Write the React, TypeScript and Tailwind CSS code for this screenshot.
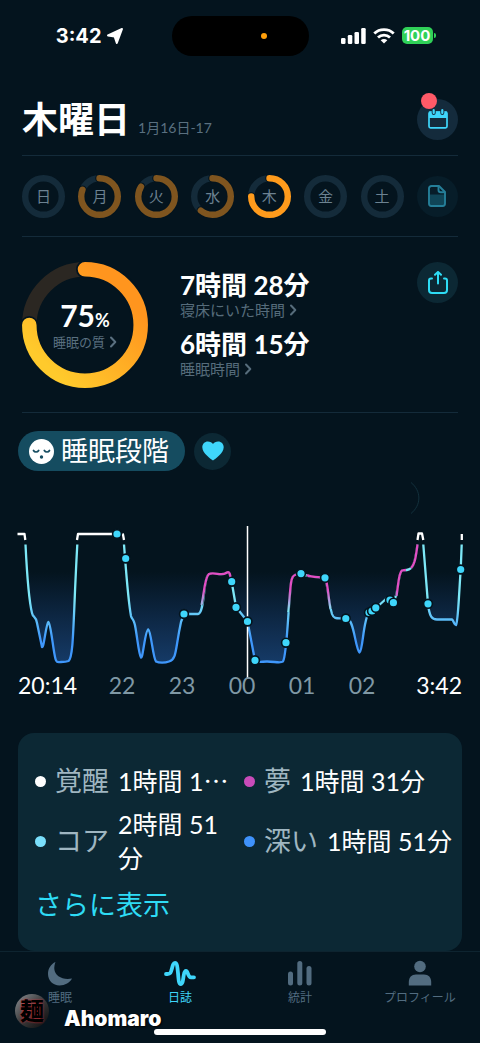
import type { ReactNode } from 'react';

const days = [
  { label: '日', value: 0 },
  { label: '月', value: 81 },
  { label: '火', value: 84 },
  { label: '水', value: 61 },
  { label: '木', value: 75, active: true },
  { label: '金', value: 0 },
  { label: '土', value: 0 },
];

const hours = ['22', '23', '00', '01', '02'];

// Sleep events shown as dots on the curve
const events = [
  [117, 534], [125.7, 558.5], [184, 614], [231.7, 581.7], [236, 607.3], [247.5, 621.5],
  [255, 660.3], [286, 642.7], [301, 573.6], [325, 577.8], [345.8, 618.5], [369, 612.5],
  [372, 611], [375.8, 607.8], [390, 600], [393.4, 602.7], [428, 603.8], [460.7, 569.5],
];

const curve =
  'M25.5 544.5 C27 575 29.5 603 32 613 C33 618 35.5 615 37 623 L42 647 C44 648 46 624 48.3 622 C51 624 53 650 55.5 659 C56.5 663 58 662 61 662 C64 662 66 662 68.5 661 C74 657 73 620 77.3 544.5' +
  ' L123.5 544.5 C126 570 128 600 131 616 C132 620 134 618 135.5 628 C138 643 139 655 141 657.5 C143 659 145 630 148.3 629.5 C151 631 153 658 156 661.5 C159 663 165 663 169 661.5 C177 659 175 650 181 622 L184 614' +
  ' H198 C205 613 203 577 209 574 C214 572 222 576 226 573 C230 570 230 577 231.7 582 L236 607 L247.5 621.5 L255 660.5 C258 663 262 661.5 267 661.5 C274 661.5 281 663.5 283 661.5 C287 655 288 610 291 583 C292 575 295 574 301 573.6' +
  ' C308 577 315 577 325 578 C328 585 328 600 332 614 C334 620 338 618 346 618.5 C354 617 355 648 359.5 652.5 C363 651 363 620 369 612.5 L376 608 L387 598 L393.4 602.7 C399 592 398 573 402 570.5 C405 570 409 571 412 567 C415 563 416 556 417.5 544.5' +
  ' H423.3 L428 604 C429.5 617 432 619.5 437 619.5 H452 C454 621 454 625 456 625 C458 622 458 610 460.7 569.5 L461.7 544.5';

const dreams = [
  'M201.5 605 C204 595 204.5 577 209 574 C214 572 222 576 226 573 C229 571 230 573 230.5 577',
  'M288.3 612 C289.5 600 290 590 291 583 C292 577 293 575.5 296 574.5',
  'M307 575 C310 577 314 577 320 577.3',
  'M326.5 582 C328 588 328.5 598 330.5 609',
  'M396.5 596 C398.5 584 398.5 573 402 570.5 C404 570 405 570 406 570',
  'M411 568 C415 564 416 556 417.5 544.5',
];

function StatusBar() {
  return (
    <div className="grid h-[71px] grid-cols-[1fr_137px_1fr] items-center font-['Inter',sans-serif] text-white">
      <div className="flex items-center justify-end gap-1 pr-12">
        <span className="text-xl leading-6 font-bold">3:42</span>
        <svg width="18" height="18" viewBox="0 0 18 18" fill="currentColor" stroke="currentColor" strokeWidth="2" strokeLinejoin="round" aria-hidden="true">
          <path d="M16 2 L10.8 16 L8.6 9.4 L2 8.4 Z" />
        </svg>
      </div>
      <div className="flex h-10 items-center justify-end rounded-full bg-black pr-[42px]">
        <span className="size-[6px] rounded-full bg-[#ff9f0a]" />
      </div>
      <div className="flex items-center gap-[7px] pl-8">
        <svg width="25" height="16" viewBox="0 0 25 16" fill="currentColor" aria-hidden="true">
          <rect x="0" y="10" width="4.5" height="6" rx="1.3" />
          <rect x="6.8" y="7" width="4.5" height="9" rx="1.3" />
          <rect x="13.5" y="4" width="4.5" height="12" rx="1.3" />
          <rect x="20.2" y="0" width="4.5" height="16" rx="1.3" />
        </svg>
        <svg width="22" height="16" viewBox="0 0 22 16" fill="none" stroke="currentColor" strokeWidth="2.8" aria-hidden="true">
          <path d="M1.3 5.6 C6.5 .4 15.5 .4 20.7 5.6" />
          <path d="M5 9.6 C8.3 6.4 13.7 6.4 17 9.6" />
          <path d="M11 15.5 L7.7 12.3 C9.5 10.6 12.5 10.6 14.3 12.3 Z" fill="currentColor" stroke="none" />
        </svg>
        <div className="flex items-center gap-px">
          <span className="flex h-[17px] w-[31px] items-center justify-center rounded-[5px] bg-[#30d158] text-[15px] leading-4 font-bold">100</span>
          <span className="h-[5px] w-[2px] rounded-r-full bg-[#30d158]" />
        </div>
      </div>
    </div>
  );
}

function DayRing({ label, value, active }: { label: string; value: number; active?: boolean }) {
  return (
    <button className="grid size-[43px] place-items-center" aria-pressed={!!active}>
      <svg className="col-start-1 row-start-1 size-full" viewBox="0 0 43 43" fill="none" aria-hidden="true">
        <circle cx="21.5" cy="21.5" r="18.3" stroke="#142b3a" strokeWidth="6.4" />
        {value > 0 && (
          <g transform="rotate(-90 21.5 21.5)" strokeLinecap="round">
            <circle cx="21.5" cy="21.5" r="18.3" stroke="#04141e" strokeWidth="8.6" pathLength="100" strokeDasharray={`${value} 100`} />
            <circle cx="21.5" cy="21.5" r="18.3" stroke={active ? '#ff9b1c' : '#7f551f'} strokeWidth="6.4" pathLength="100" strokeDasharray={`${value} 100`} />
          </g>
        )}
      </svg>
      <span className="col-start-1 row-start-1 text-[15px] leading-5 text-[#6c8291]">{label}</span>
    </button>
  );
}

function Chevron() {
  return (
    <svg width="8" height="12" viewBox="0 0 8 12" fill="none" stroke="currentColor" strokeWidth="2" strokeLinecap="round" strokeLinejoin="round" aria-hidden="true">
      <path d="M2 1.5 L6.3 6 L2 10.5" />
    </svg>
  );
}

function QualityRing() {
  return (
    <button className="grid size-[126px] shrink-0 place-items-center">
      <svg className="col-start-1 row-start-1 size-full" viewBox="0 0 126 126" fill="none" aria-hidden="true">
        <defs>
          <linearGradient id="quality" x1="0.1" y1="0.8" x2="0.75" y2="0.15">
            <stop offset="0" stopColor="#ffca2c" />
            <stop offset="1" stopColor="#ff951e" />
          </linearGradient>
        </defs>
        <circle cx="63" cy="63" r="55.7" stroke="#2b2722" strokeWidth="14.5" />
        <g strokeLinecap="round" transform="rotate(-90 63 63)">
          <circle cx="63" cy="63" r="55.7" stroke="#04141e" strokeWidth="18" pathLength="100" strokeDasharray="75 100" />
        </g>
        <path d="M63 7.3 A55.7 55.7 0 1 1 7.3 63" stroke="url(#quality)" strokeWidth="14.5" strokeLinecap="round" />
      </svg>
      <span className="col-start-1 row-start-1 flex flex-col items-center">
        <span className="text-[30px] leading-7 font-bold text-white">
          75<span className="text-lg leading-7">%</span>
        </span>
        <span className="flex items-center gap-1 text-[13px] leading-4 text-[#5a7080]">
          睡眠の質
          <Chevron />
        </span>
      </span>
    </button>
  );
}

function Metric({ value, label }: { value: string; label: string }) {
  return (
    <button className="block text-left">
      <span className="block text-[26px] leading-8 font-bold text-white">{value}</span>
      <span className="flex items-center gap-1 text-[15px] leading-[18px] text-[#566c7b]">
        {label}
        <Chevron />
      </span>
    </button>
  );
}

function SleepChart() {
  return (
    <svg className="block w-full overflow-visible" viewBox="18 477 444 196" fill="none" role="img" aria-label="睡眠段階のグラフ">
      <defs>
        <linearGradient id="depth" gradientUnits="userSpaceOnUse" x1="0" y1="598" x2="0" y2="640">
          <stop offset="0" stopColor="#7de8f7" />
          <stop offset="1" stopColor="#3f97fb" />
        </linearGradient>
        <linearGradient id="shade" gradientUnits="userSpaceOnUse" x1="0" y1="572" x2="0" y2="662">
          <stop offset="0" stopColor="#17396a" stopOpacity="0" />
          <stop offset="1" stopColor="#153a66" />
        </linearGradient>
        <linearGradient id="dream" gradientUnits="userSpaceOnUse" x1="0" y1="590" x2="0" y2="611">
          <stop offset="0" stopColor="#e14fc4" />
          <stop offset="1" stopColor="#7de8f7" />
        </linearGradient>
      </defs>
      <path d="M411 482.5 C421.5 491 421.5 505 411 513.5" stroke="#12303c" />
      <path d={curve} fill="url(#shade)" />
      <g strokeWidth="2.3" strokeLinejoin="round">
        {curve.split(/ L123.5 544.5| H423.3/).map((part, i) => (
          <path key={i} d={['', 'M124 544.5', 'M423.3 544.5'][i] + part} stroke="url(#depth)" />
        ))}
        {dreams.map((d) => (
          <g key={d}>
            <path d={d} stroke="#04141e" strokeWidth="3" />
            <path d={d} stroke="url(#dream)" />
          </g>
        ))}
        <path
          d="M17.5 534 H24.5 L25.3 540 M77 540 L78 534 H112 M122.8 533.5 L124 540 M417.5 540 L418.5 533.5 H422 L423.3 540 M461.8 534 V540"
          stroke="#fff"
        />
      </g>
      <path d="M247.5 526 V679" stroke="#fff" strokeWidth="1.5" />
      {events.map(([x, y]) => (
        <circle key={x} cx={x} cy={y} r="4.4" fill="#3fd6fb" stroke="#04141e" strokeWidth="1.6" />
      ))}
    </svg>
  );
}

function Stage({ dot, name, value }: { dot: string; name: string; value: string }) {
  return (
    <div className="flex min-h-10 items-center gap-[9px] odd:pr-1">
      <span className={`size-[11px] shrink-0 rounded-full ${dot}`} />
      <dt className="shrink-0 text-[#9fb6c1]">{name}</dt>
      <dd className="text-[25px] text-white">{value}</dd>
    </div>
  );
}

function Tab({ label, active, children }: { label: string; active?: boolean; children: ReactNode }) {
  return (
    <a
      href="#"
      aria-current={active ? 'page' : undefined}
      className={`flex flex-col items-center gap-1 text-xs leading-4 ${active ? 'text-[#3fd6fb]' : 'text-[#526c80]'}`}
    >
      <svg width="32" height="26" viewBox="0 0 32 26" fill="currentColor" aria-hidden="true">
        {children}
      </svg>
      {label}
    </a>
  );
}

function TabBar() {
  return (
    <nav className="grid h-[91px] grid-cols-4 items-start border-t border-[#0e2430] pt-2">
      <Tab label="睡眠">
        <path d="M11.5 2 C7 4 4 8.5 4 14 C4 20.5 9 25.5 15.5 25.5 C21 25.5 26 22.5 28 18.5 C19 20.5 10.8 16 10.3 9 C10.2 6.5 10.7 4 11.5 2 Z" />
      </Tab>
      <Tab label="日誌" active>
        <path
          d="M2 14 H3.5 C6.5 14 6.8 12.8 7.8 9 C8.8 5 9.3 3 11 3 C13 3 13.3 6 14 13 C14.6 20 14.8 24 16.8 24 C19 24 19 19 19.8 15 C20.3 12.3 20.8 11 22 11 C24.3 11 23.5 17.3 27 17.3 H30"
          fill="none"
          stroke="currentColor"
          strokeWidth="3.8"
          strokeLinecap="round"
          strokeLinejoin="round"
        />
      </Tab>
      <Tab label="統計">
        <rect x="4" y="11.5" width="5" height="14" rx="2.5" />
        <rect x="13.3" y="1" width="5" height="24.5" rx="2.5" />
        <rect x="22.5" y="6" width="5" height="19.5" rx="2.5" />
      </Tab>
      <Tab label="プロフィール">
        <circle cx="16" cy="6.5" r="5.8" />
        <path d="M4.8 25.5 V22 C4.8 17.5 7.5 14.5 12 14.5 H20 C24.5 14.5 27.2 17.5 27.2 22 V25.5 Z" />
      </Tab>
    </nav>
  );
}

export default function App() {
  return (
    <div className="relative min-h-screen bg-[#04141e] font-['Lato','Noto_Sans_CJK_JP',sans-serif]">
      <StatusBar />

      <main>
        <div className="px-[22px]">
          <header className="flex h-[85px] items-center justify-between border-b border-[#142b3a] pt-3">
            <div className="flex items-baseline gap-2">
              <h1 className="text-4xl leading-9 font-bold text-white">木曜日</h1>
              <span className="text-sm leading-5 text-[#5a7080]">1月16日-17</span>
            </div>
            <button className="relative grid size-[41px] place-items-center rounded-full bg-[#142b3c]" aria-label="カレンダー">
              <svg width="20" height="20" viewBox="0 0 20 20" fill="none" aria-hidden="true">
                <path d="M1 2.5 H19 V9 H1 Z" fill="#3fd6fb" />
                <rect x="1" y="3" width="18" height="15.8" rx="1.5" stroke="#3fd6fb" strokeWidth="1.7" />
                <path d="M5.7 0 V4 M14.3 0 V4" stroke="#142b3c" strokeWidth="4" strokeLinecap="round" />
                <path d="M5.7 1.2 V4 M14.3 1.2 V4" stroke="#3fd6fb" strokeWidth="2.2" strokeLinecap="round" />
              </svg>
              <span className="absolute -top-[6px] left-1 size-4 rounded-full bg-[#ff5a68]" />
            </button>
          </header>

          <div className="flex h-[81px] items-center justify-between border-b border-[#142b3a]">
            {days.map((day) => (
              <DayRing key={day.label} {...day} />
            ))}
            <button className="grid size-[41px] place-items-center rounded-full bg-[#071d29]" aria-label="メモ">
              <svg width="18" height="22" viewBox="0 0 18 22" fill="none" stroke="#257f99" strokeWidth="1.9" strokeLinejoin="round" aria-hidden="true">
                <path d="M1.5 9.5 H16.5 V19 C16.5 20 16 20.7 15 20.7 H3 C2 20.7 1.5 20 1.5 19 Z" fill="#104557" stroke="none" />
                <path d="M3.5 1 H11 L17 7 V18.5 C17 20 16.2 21 14.7 21 H3.3 C1.8 21 1 20 1 18.5 V3.5 C1 2 2 1 3.5 1 Z" />
                <path d="M10.5 1.5 V5 C10.5 6.5 11.3 7.3 12.8 7.3 H16.5" />
              </svg>
            </button>
          </div>

          <section className="flex items-start border-b border-[#142b3a] pt-[25px] pb-6">
            <QualityRing />
            <div className="ml-8 flex-1 space-y-[9px] pt-[7px]">
              <Metric value="7時間 28分" label="寝床にいた時間" />
              <Metric value="6時間 15分" label="睡眠時間" />
            </div>
            <button className="grid size-[41px] place-items-center rounded-full bg-[#0c2834]" aria-label="共有">
              <svg width="20" height="24" viewBox="0 0 20 24" fill="none" stroke="#2edcf5" strokeWidth="2" strokeLinecap="round" strokeLinejoin="round" aria-hidden="true">
                <path d="M4 7.5 H3 C1.7 7.5 1 8.3 1 9.5 V19 C1 21 2 22 4 22 H16 C18 22 19 21 19 19 V9.5 C19 8.3 18.3 7.5 17 7.5 H16" />
                <path d="M10 12.5 V1.5 M7 3.8 L10 .9 L13 3.8" />
              </svg>
            </button>
          </section>
        </div>

        <div className="px-[18px]">
          <div className="flex items-center gap-[9px] pt-[18px]">
            <button className="flex h-10 items-center gap-[7px] rounded-full bg-[#154c60] pr-4 pl-[11px] text-[27px] leading-10 text-white">
              <svg width="25" height="25" viewBox="0 0 25 25" fill="none" stroke="#154c60" strokeWidth="1.7" strokeLinecap="round" aria-hidden="true">
                <circle cx="12.5" cy="12.5" r="12.5" fill="#fff" stroke="none" />
                <path d="M4.5 11.5 C5.5 13.5 8.5 13.5 9.7 11.5 M15.3 11.5 C16.5 13.5 19.5 13.5 20.5 11.5" />
                <circle cx="12.5" cy="18" r="1.7" fill="#154c60" stroke="none" />
              </svg>
              睡眠段階
            </button>
            <button className="grid size-[37px] place-items-center rounded-full bg-[#0c2834]" aria-label="心拍数">
              <svg width="22" height="20" viewBox="0 0 22 20" fill="#3fd6fb" aria-hidden="true">
                <path d="M11 19.5 C9 18 .3 12.5 .3 6.3 C.3 2.8 2.8 .5 5.8 .5 C8.2 .5 10 1.5 11 3 C12 1.5 13.8 .5 16.2 .5 C19.2 .5 21.7 2.8 21.7 6.3 C21.7 12.5 13 18 11 19.5 Z" />
              </svg>
            </button>
          </div>

          <div className="pt-[6px]">
            <SleepChart />
            <div className="grid grid-cols-[74fr_60fr_60fr_60fr_60fr_60fr_70fr] text-center text-[23px] leading-6 text-[#7f98a5]">
              <span className="text-left text-white">20:14</span>
              {hours.map((hour) => (
                <span key={hour}>{hour}</span>
              ))}
              <span className="text-right text-white">3:42</span>
            </div>
          </div>

          <section className="mt-9 rounded-2xl bg-[#0c2834] pt-7 pr-[9px] pb-[26px] pl-[17px] text-[27px] leading-[34px]">
            <dl className="grid grid-cols-2 items-center gap-y-[6px]">
              <Stage dot="bg-white" name="覚醒" value="1時間 1⋯" />
              <Stage dot="bg-[#c94bb9]" name="夢" value="1時間 31分" />
              <Stage dot="bg-[#7adffb]" name="コア" value="2時間 51分" />
              <Stage dot="bg-[#3f92fb]" name="深い" value="1時間 51分" />
            </dl>
            <button className="mt-[10px] block leading-10 text-[#2edcf5]">さらに表示</button>
          </section>
        </div>
      </main>

      <TabBar />

      {/* Home indicator */}
      <div className="absolute inset-x-0 bottom-2 mx-auto h-[6px] w-[172px] rounded-full bg-white" />

      {/* Uploader signature */}
      <div className="absolute bottom-[14px] left-[15px] flex items-center gap-[15px]">
        <span className="grid size-[34px] place-items-center rounded-full bg-linear-to-br from-[#8f9498] via-[#3a3a3b] to-[#0b0b0c] text-2xl leading-6 font-black text-black [text-shadow:0_0_2px_#e0303a]">
          麺
        </span>
        <span className="mt-4 font-['Inter',sans-serif] text-[21px] leading-5 font-black text-white [text-shadow:1px_1px_2px_#000]">Ahomaro</span>
      </div>
    </div>
  );
}
